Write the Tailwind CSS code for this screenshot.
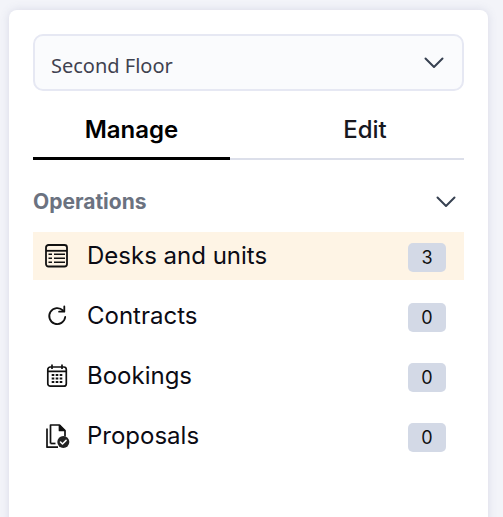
<!DOCTYPE html>
<html>
<head>
<meta charset="utf-8">
<script src="https://cdn.jsdelivr.net/npm/@tailwindcss/browser@4"></script>
</head>
<body class="bg-[#f3f4f9] h-[517px] w-[503px] overflow-hidden font-['Inter',sans-serif]">
<div class="mt-[10px] ml-[9px] w-[479px] h-[520px] bg-white rounded-t-[8px] shadow-[0_0_10px_rgba(100,105,150,0.18)] px-6 pt-6">
  <div class="h-[57px] rounded-[10px] border-2 border-[#e6e8f3] bg-[#fafbfd] flex items-center justify-between pl-4 pr-[18px]">
    <span class="font-['Noto_Sans',sans-serif] text-[20px] text-[#3f4250] mt-[6px] leading-none">Second Floor</span>
    <svg class="w-[20px] h-[12px]" viewBox="0 0 20 12" fill="none" stroke="#374151" stroke-width="2" stroke-linecap="round" stroke-linejoin="round"><path d="M1.500 1.500 10 10 18.500 1.500"/></svg>
  </div>
  <div class="flex justify-between mt-[9px] h-[60px] border-b-2 border-[#dcdfea]">
    <div class="w-[197px] -mb-[2px] h-[60px] border-b-[3px] border-black flex items-center justify-center text-[24px] font-semibold text-black pt-[2px]">Manage</div>
    <div class="w-[198px] h-[58px] flex items-center justify-center text-[24px] font-medium text-[#18181f] pt-[2px]">Edit</div>
  </div>
  <div class="flex items-center justify-between h-[28px] mt-[28px]">
    <span class="text-[21px] font-bold text-[#6b7280]">Operations</span>
    <svg class="w-[20px] h-[12px] mr-[8px]" viewBox="0 0 20 12" fill="none" stroke="#374151" stroke-width="2" stroke-linecap="round" stroke-linejoin="round"><path d="M1.500 1.500 10 10 18.500 1.500"/></svg>
  </div>
  <div class="flex flex-col gap-[12px] mt-[16px]">
    <div class="h-[48px] bg-[#fef4e5] flex items-center pl-[12px] pr-[18px]">
      <svg class="w-[25px] h-[24px] shrink-0" viewBox="0 0 25 24" fill="none" stroke="#111" stroke-width="1.800"><rect x="1" y="1" width="21" height="21.500" rx="2.500"/><path d="M1 6.800h21"/><path stroke-width="1.500" d="M3.500 10.300h3.500M9 10.300h11M3.500 14.300h3.500M9 14.300h11M3.500 18.300h3.500M9 18.300h11"/></svg>
      <span class="ml-[17px] text-[24px] text-[#0b0b14] flex-1">Desks and units</span>
      <span class="w-[38px] h-[29px] mt-[3px] rounded-[5px] bg-[#d3d9e6] flex items-center justify-center text-[18px] text-[#111]">3</span>
    </div>
    <div class="h-[48px] flex items-center pl-[12px] pr-[18px]">
      <svg class="w-[25px] h-[24px] shrink-0" viewBox="0 0 25 24" fill="none" stroke="#111" stroke-width="1.800" stroke-linecap="round" stroke-linejoin="round"><path d="M18 6.500a8 8 0 1 0 2.200 6.500"/><path d="M19.300 2.500v5.200h-5.200"/></svg>
      <span class="ml-[17px] text-[24px] text-[#0b0b14] flex-1">Contracts</span>
      <span class="w-[38px] h-[29px] mt-[3px] rounded-[5px] bg-[#d3d9e6] flex items-center justify-center text-[18px] text-[#111]">0</span>
    </div>
    <div class="h-[48px] flex items-center pl-[12px] pr-[18px]">
      <svg class="w-[25px] h-[24px] shrink-0" viewBox="0 0 25 24" fill="none" stroke="#111" stroke-width="1.700"><rect x="2.800" y="3" width="18.500" height="19.200" rx="2.500"/><path d="M2.800 7.300h18.500M7 0.500v4.500M17 0.500v4.500"/><path stroke-width="2" d="M6.700 11h2.600M10.700 11h2.600M14.700 11h2.600M6.700 14.500h2.600M10.700 14.500h2.600M14.700 14.500h2.600M6.700 18h2.600M10.700 18h2.600M14.700 18h2.600"/></svg>
      <span class="ml-[17px] text-[24px] text-[#0b0b14] flex-1">Bookings</span>
      <span class="w-[38px] h-[29px] mt-[3px] rounded-[5px] bg-[#d3d9e6] flex items-center justify-center text-[18px] text-[#111]">0</span>
    </div>
    <div class="h-[48px] flex items-center pl-[12px] pr-[18px]">
      <svg class="w-[25px] h-[24px] shrink-0" viewBox="0 0 25 24" fill="none" stroke="#111" stroke-width="1.700" stroke-linejoin="round"><path d="M5.500 19.500V1h9l5.500 5.500v6"/><path d="M14.500 1v5.500h5.500" fill="#111"/><path d="M2 4.500v18.700h11"/><path d="M5.500 19.500h5"/><circle cx="18.300" cy="18" r="6" fill="#222" stroke="none"/><path d="M15.500 18l2 2 3.600-3.600" stroke="#fff" stroke-width="1.500" stroke-linecap="round"/></svg>
      <span class="ml-[17px] text-[24px] text-[#0b0b14] flex-1">Proposals</span>
      <span class="w-[38px] h-[29px] mt-[3px] rounded-[5px] bg-[#d3d9e6] flex items-center justify-center text-[18px] text-[#111]">0</span>
    </div>
  </div>
</div>
</body>
</html>
